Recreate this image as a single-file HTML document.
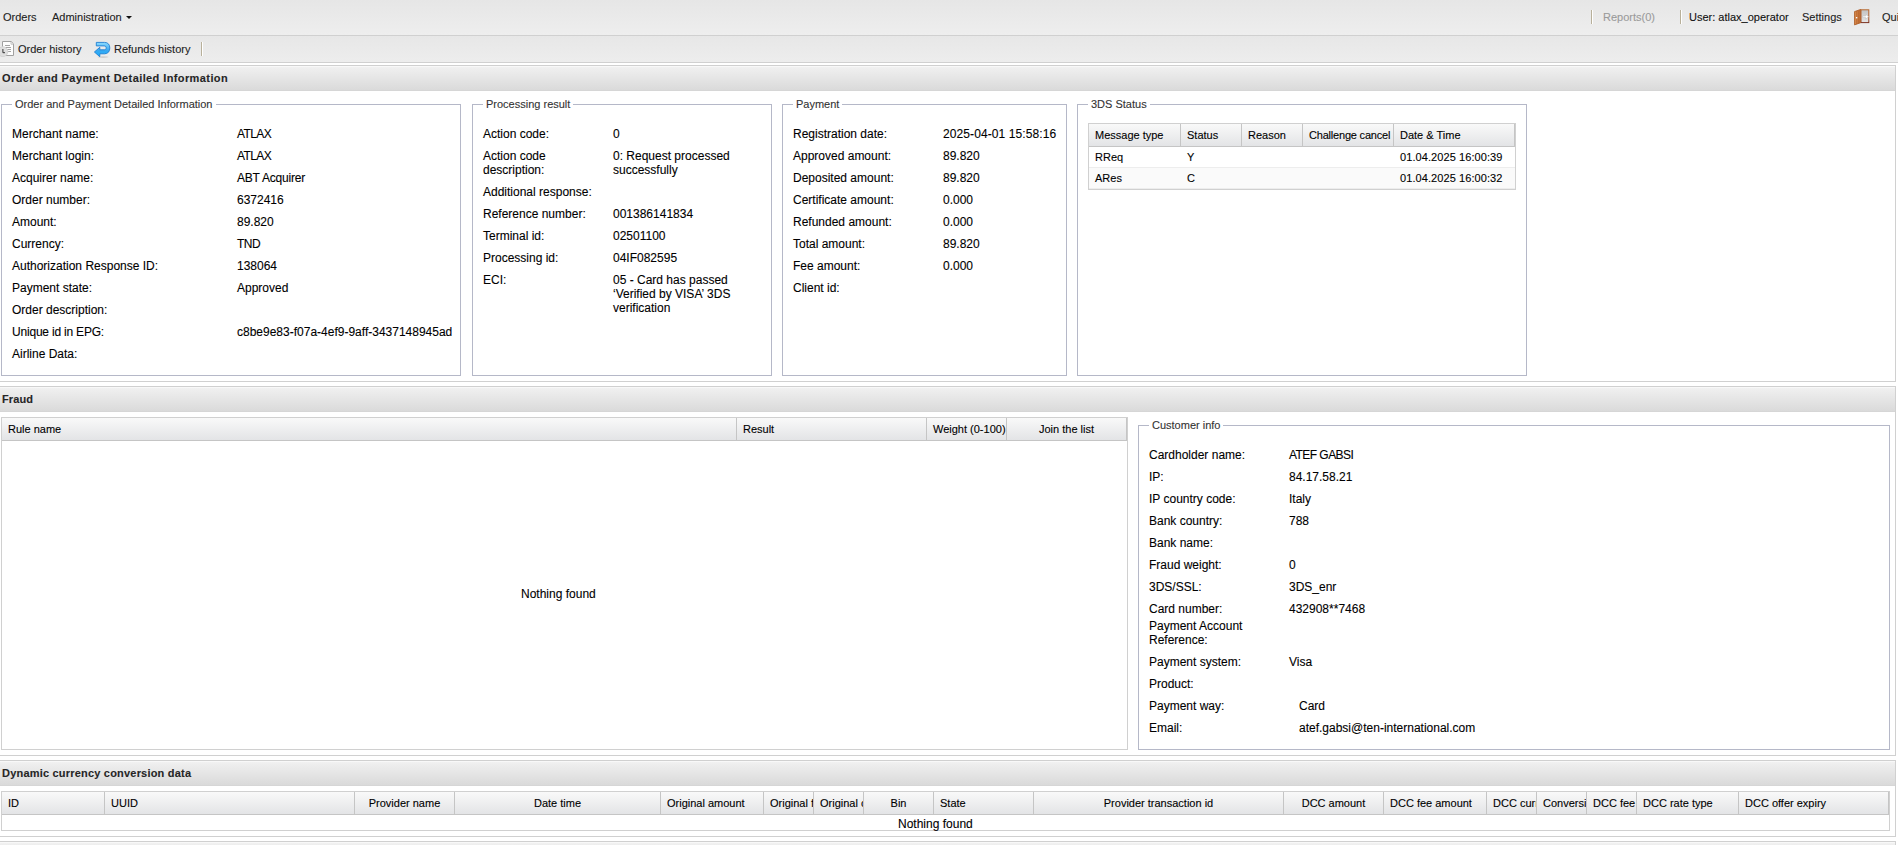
<!DOCTYPE html>
<html lang="en">
<head>
<meta charset="utf-8">
<title>Order and Payment Detailed Information</title>
<style>
*{box-sizing:border-box;}
html,body{margin:0;padding:0;}
body{width:1898px;height:845px;overflow:hidden;background:#fff;position:relative;
  font-family:"Liberation Sans",Tahoma,Arial,sans-serif;font-size:12px;color:#000;-webkit-text-stroke:0.1px;}
.abs{position:absolute;}
/* toolbars */
#tb1{left:0;top:0;width:1898px;height:36px;border-bottom:1px solid #d0d0d0;
  background:linear-gradient(#e6e6e6,#eeeeee);}
#tb2{left:0;top:36px;width:1898px;height:27px;border-bottom:1px solid #d0d0d0;
  background:linear-gradient(#e7e7e7,#ededed);}
.tbtn{position:absolute;font-size:11px;line-height:14px;color:#222;white-space:nowrap;}
.tsep{position:absolute;width:2px;height:14px;border-left:1px solid #b8b09a;border-right:1px solid #fff;}
/* panels */
.panel{position:absolute;left:-5px;width:1901px;border:1px solid #d0d0d0;background:#fff;}
.phead{position:absolute;left:0;top:0;right:0;height:25px;
  background:linear-gradient(#f3f3f3,#eeeeee 12%,#dadada 96%,#d2d2d2);box-shadow:inset 0 1px 0 #f8f8f8;}
.ptitle{position:absolute;left:6px;top:5px;font-size:11px;line-height:14px;font-weight:bold;color:#262626;white-space:nowrap;}
/* fieldsets */
.fs{position:absolute;border:1px solid #b5b8c8;}
.fs .lg{position:absolute;left:10px;top:-8px;background:#fff;padding:0 3px;font-size:11px;line-height:14px;color:#333;white-space:nowrap;}
.rows{position:absolute;left:10px;top:18px;right:10px;}
.row{display:flex;min-height:22px;}
.row .l{flex:none;padding:4px 0;line-height:14px;}
.row .v{flex:1;padding:4px 0;line-height:14px;}
/* grids */
.grid{position:absolute;border:1px solid #d0d0d0;background:#fff;}
.ghead{position:absolute;left:0;top:0;right:0;height:23px;border-bottom:1px solid #c5c5c5;
  background:linear-gradient(#f9f9f9,#e3e4e6);}
.gc{position:absolute;top:0;height:22px;border-right:1px solid #c5c5c5;font-size:11px;line-height:14px;
  padding:4px 0 0 6px;white-space:nowrap;overflow:hidden;color:#000;}
.gc.c{text-align:center;padding-left:0;}
.empty{position:absolute;font-size:12px;line-height:14px;white-space:nowrap;}
.grow{position:absolute;left:0;right:0;height:21px;border-bottom:1px solid #ededed;font-size:11px;line-height:14px;background:#fff;}
.grow.alt{background:#fafafa;}
.grow span{position:absolute;top:3px;white-space:nowrap;}
</style>
</head>
<body>

<!-- ===== top menu toolbar ===== -->
<div id="tb1" class="abs">
  <span class="tbtn" style="left:3px;top:10px;">Orders</span>
  <span class="tbtn" style="left:52px;top:10px;">Administration</span>
  <span class="abs" style="left:126px;top:16px;width:0;height:0;border-left:3px solid transparent;border-right:3px solid transparent;border-top:3px solid #111;"></span>
  <span class="tsep" style="left:1591px;top:10px;"></span>
  <span class="tbtn" style="left:1603px;top:10px;color:#9a9a9a;">Reports(0)</span>
  <span class="tsep" style="left:1680px;top:10px;"></span>
  <span class="tbtn" style="left:1689px;top:10px;color:#111;">User: atlax_operator</span>
  <span class="tbtn" style="left:1802px;top:10px;">Settings</span>
  <svg class="abs" style="left:1854px;top:9px;" width="16" height="17" viewBox="0 0 16 17">
    <defs>
      <linearGradient id="dg" x1="0" y1="0" x2="0" y2="1"><stop offset="0" stop-color="#c2c2c2"/><stop offset="1" stop-color="#e6e6e6"/></linearGradient>
      <linearGradient id="df" x1="0" y1="0" x2="0" y2="1"><stop offset="0" stop-color="#b8682c"/><stop offset="0.7" stop-color="#a9562a"/><stop offset="1" stop-color="#7a3020"/></linearGradient>
      <linearGradient id="dw" x1="0" y1="0" x2="1" y2="0"><stop offset="0" stop-color="#d88b4c"/><stop offset="1" stop-color="#bd6a30"/></linearGradient>
    </defs>
    <rect x="6.9" y="0.8" width="7.9" height="12.8" fill="url(#dg)" stroke="url(#df)" stroke-width="1"/>
    <path d="M0.5 2.6 L6.7 0.4 L6.7 13.7 L0.5 15.9 Z" fill="url(#dw)" stroke="#ab5a26" stroke-width="0.8" stroke-linejoin="round"/>
    <path d="M2.6 2.2 V14.9 M4.6 1.5 V14.2" stroke="#a8592a" stroke-width="0.5" opacity="0.75"/>
    <rect x="1.9" y="8" width="1.4" height="1.4" fill="#fff"/>
    <path d="M8.6 7 H11.6 V5.3 L14.7 7.7 L11.6 10.1 V8.4 H8.6 Z" fill="#fff" stroke="#b9b9b9" stroke-width="0.5"/>
  </svg>
  <span class="tbtn" style="left:1882px;top:10px;">Quit</span>
</div>

<!-- ===== second toolbar ===== -->
<div id="tb2" class="abs">
  <svg class="abs" style="left:-2px;top:5px;" width="16" height="16" viewBox="0 0 16 16">
    <path d="M4.5 0.5 H13.2 L15.5 2.8 V14.5 H4.5 Z" fill="#fdfdfd" stroke="#a0a0a0"/>
    <path d="M13 0.8 V3.2 H15.3" fill="none" stroke="#bdbdbd" stroke-width="0.9"/>
    <path d="M7 4.5 H12 M7 6.5 H13 M8.5 8.5 H13 M9.5 10.5 H13" stroke="#a4a4a4" stroke-width="1"/>
    <circle cx="4.9" cy="10.7" r="4.9" fill="#dfdfdf" stroke="#d2d2d2" stroke-width="0.9"/>
    <path d="M4.9 8 V11.7 H7" fill="none" stroke="#2e2e2e" stroke-width="0.95"/>
  </svg>
  <span class="tbtn" style="left:18px;top:6px;">Order history</span>
  <svg class="abs" style="left:94px;top:5px;" width="17" height="17" viewBox="0 0 17 17">
    <defs>
      <linearGradient id="rg" x1="0" y1="0" x2="0" y2="1"><stop offset="0" stop-color="#8fdcff"/><stop offset="0.55" stop-color="#3aa8f0"/><stop offset="1" stop-color="#15b0ff"/></linearGradient>
    </defs>
    <ellipse cx="9" cy="16.1" rx="5.5" ry="0.8" fill="#000" opacity="0.13"/>
    <path d="M2.3 1.4 H10.5 C14.2 1.4 15.8 3.8 15.8 7 C15.8 10.4 14 12.8 10.5 12.8 H5.8 V15.7 L0.4 11 L5.8 6.3 V8.8 H10.2 C11.6 8.8 12.2 8 12.2 6.9 C12.2 5.7 11.5 4.9 10.2 4.9 H2.3 Z" fill="url(#rg)" stroke="#1f7fd2" stroke-width="0.9" stroke-linejoin="round"/>
  </svg>
  <span class="tbtn" style="left:114px;top:6px;">Refunds history</span>
  <span class="tsep" style="left:201px;top:6px;"></span>
</div>

<!-- ===== Panel 1: Order and Payment Detailed Information ===== -->
<div class="panel" style="top:65px;height:317px;">
  <div class="phead"><span class="ptitle" style="letter-spacing:0.4px;">Order and Payment Detailed Information</span></div>

  <div class="fs" style="left:5px;top:38px;width:460px;height:272px;">
    <span class="lg">Order and Payment Detailed Information</span>
    <div class="rows">
      <div class="row"><span class="l" style="width:225px">Merchant name:</span><span class="v" style="letter-spacing:-0.6px">ATLAX</span></div>
      <div class="row"><span class="l" style="width:225px">Merchant login:</span><span class="v" style="letter-spacing:-0.6px">ATLAX</span></div>
      <div class="row"><span class="l" style="width:225px">Acquirer name:</span><span class="v" style="letter-spacing:-0.2px">ABT Acquirer</span></div>
      <div class="row"><span class="l" style="width:225px">Order number:</span><span class="v">6372416</span></div>
      <div class="row"><span class="l" style="width:225px">Amount:</span><span class="v">89.820</span></div>
      <div class="row"><span class="l" style="width:225px">Currency:</span><span class="v" style="letter-spacing:-0.5px">TND</span></div>
      <div class="row"><span class="l" style="width:225px">Authorization Response ID:</span><span class="v">138064</span></div>
      <div class="row"><span class="l" style="width:225px">Payment state:</span><span class="v">Approved</span></div>
      <div class="row"><span class="l" style="width:225px">Order description:</span><span class="v"></span></div>
      <div class="row"><span class="l" style="width:225px;letter-spacing:-0.2px">Unique id in EPG:</span><span class="v" style="white-space:nowrap">c8be9e83-f07a-4ef9-9aff-3437148945ad</span></div>
      <div class="row"><span class="l" style="width:225px">Airline Data:</span><span class="v"></span></div>
    </div>
  </div>

  <div class="fs" style="left:476px;top:38px;width:300px;height:272px;">
    <span class="lg">Processing result</span>
    <div class="rows">
      <div class="row"><span class="l" style="width:130px">Action code:</span><span class="v">0</span></div>
      <div class="row"><span class="l" style="width:130px">Action code<br>description:</span><span class="v">0: Request processed<br>successfully</span></div>
      <div class="row"><span class="l" style="width:130px">Additional response:</span><span class="v"></span></div>
      <div class="row"><span class="l" style="width:130px">Reference number:</span><span class="v">001386141834</span></div>
      <div class="row"><span class="l" style="width:130px">Terminal id:</span><span class="v">02501100</span></div>
      <div class="row"><span class="l" style="width:130px">Processing id:</span><span class="v">04IF082595</span></div>
      <div class="row"><span class="l" style="width:130px">ECI:</span><span class="v">05 - Card has passed<br>&lsquo;Verified by VISA&rsquo; 3DS<br>verification</span></div>
    </div>
  </div>

  <div class="fs" style="left:786px;top:38px;width:285px;height:272px;">
    <span class="lg">Payment</span>
    <div class="rows">
      <div class="row"><span class="l" style="width:150px">Registration date:</span><span class="v" style="white-space:nowrap;letter-spacing:0.1px">2025-04-01 15:58:16</span></div>
      <div class="row"><span class="l" style="width:150px">Approved amount:</span><span class="v">89.820</span></div>
      <div class="row"><span class="l" style="width:150px">Deposited amount:</span><span class="v">89.820</span></div>
      <div class="row"><span class="l" style="width:150px">Certificate amount:</span><span class="v">0.000</span></div>
      <div class="row"><span class="l" style="width:150px">Refunded amount:</span><span class="v">0.000</span></div>
      <div class="row"><span class="l" style="width:150px">Total amount:</span><span class="v">89.820</span></div>
      <div class="row"><span class="l" style="width:150px">Fee amount:</span><span class="v">0.000</span></div>
      <div class="row"><span class="l" style="width:150px">Client id:</span><span class="v"></span></div>
    </div>
  </div>

  <div class="fs" style="left:1081px;top:38px;width:450px;height:272px;">
    <span class="lg">3DS Status</span>
    <div class="grid" style="left:10px;top:18px;width:428px;height:67px;">
      <div class="ghead">
        <span class="gc" style="left:0;width:92px;">Message type</span>
        <span class="gc" style="left:92px;width:61px;">Status</span>
        <span class="gc" style="left:153px;width:61px;">Reason</span>
        <span class="gc" style="left:214px;width:91px;letter-spacing:-0.2px;">Challenge cancel</span>
        <span class="gc" style="left:305px;width:121px;">Date &amp; Time</span>
      </div>
      <div class="grow" style="top:23px;"><span style="left:6px;">RReq</span><span style="left:98px;">Y</span><span style="left:311px;letter-spacing:0.08px;">01.04.2025 16:00:39</span></div>
      <div class="grow alt" style="top:44px;"><span style="left:6px;">ARes</span><span style="left:98px;">C</span><span style="left:311px;letter-spacing:0.08px;">01.04.2025 16:00:32</span></div>
    </div>
  </div>
</div>

<!-- ===== Panel 2: Fraud ===== -->
<div class="panel" style="top:386px;height:370px;">
  <div class="phead"><span class="ptitle" style="letter-spacing:0.1px;">Fraud</span></div>
  <div class="grid" style="left:5px;top:30px;width:1127px;height:333px;">
    <div class="ghead">
      <span class="gc" style="left:0;width:735px;">Rule name</span>
      <span class="gc" style="left:735px;width:190px;">Result</span>
      <span class="gc" style="left:925px;width:80px;">Weight (0-100)</span>
      <span class="gc c" style="left:1005px;width:120px;">Join the list</span>
    </div>
    <div class="empty" style="left:519px;top:169px;">Nothing found</div>
  </div>
  <div class="fs" style="left:1142px;top:38px;width:752px;height:325px;">
    <span class="lg">Customer info</span>
    <div class="rows">
      <div class="row"><span class="l" style="width:140px">Cardholder name:</span><span class="v" style="letter-spacing:-0.55px">ATEF GABSI</span></div>
      <div class="row"><span class="l" style="width:140px">IP:</span><span class="v">84.17.58.21</span></div>
      <div class="row"><span class="l" style="width:140px">IP country code:</span><span class="v">Italy</span></div>
      <div class="row"><span class="l" style="width:140px">Bank country:</span><span class="v">788</span></div>
      <div class="row"><span class="l" style="width:140px">Bank name:</span><span class="v"></span></div>
      <div class="row"><span class="l" style="width:140px">Fraud weight:</span><span class="v">0</span></div>
      <div class="row"><span class="l" style="width:140px">3DS/SSL:</span><span class="v">3DS_enr</span></div>
      <div class="row"><span class="l" style="width:140px">Card number:</span><span class="v">432908**7468</span></div>
      <div class="row" style="min-height:31px;height:31px;"><span class="l" style="width:140px;padding:0;margin-top:-1px;">Payment Account<br>Reference:</span><span class="v"></span></div>
      <div class="row"><span class="l" style="width:140px">Payment system:</span><span class="v">Visa</span></div>
      <div class="row"><span class="l" style="width:140px">Product:</span><span class="v"></span></div>
      <div class="row"><span class="l" style="width:150px">Payment way:</span><span class="v">Card</span></div>
      <div class="row"><span class="l" style="width:150px">Email:</span><span class="v">atef.gabsi@ten-international.com</span></div>
    </div>
  </div>
</div>

<!-- ===== Panel 3: Dynamic currency conversion data ===== -->
<div class="panel" style="top:760px;height:77px;">
  <div class="phead"><span class="ptitle" style="letter-spacing:0.2px;">Dynamic currency conversion data</span></div>
  <div class="grid" style="left:5px;top:30px;width:1889px;height:40px;">
    <div class="ghead">
      <span class="gc" style="left:0px;width:103px;">ID</span>
      <span class="gc" style="left:103px;width:250px;">UUID</span>
      <span class="gc c" style="left:353px;width:100px;">Provider name</span>
      <span class="gc c" style="left:453px;width:206px;">Date time</span>
      <span class="gc" style="left:659px;width:103px;">Original amount</span>
      <span class="gc" style="left:762px;width:50px;">Original fee</span>
      <span class="gc" style="left:812px;width:50px;">Original currency</span>
      <span class="gc c" style="left:862px;width:70px;">Bin</span>
      <span class="gc" style="left:932px;width:100px;">State</span>
      <span class="gc c" style="left:1032px;width:250px;">Provider transaction id</span>
      <span class="gc c" style="left:1282px;width:100px;">DCC amount</span>
      <span class="gc" style="left:1382px;width:103px;">DCC fee amount</span>
      <span class="gc" style="left:1485px;width:50px;">DCC currency</span>
      <span class="gc" style="left:1535px;width:50px;">Conversion rate</span>
      <span class="gc" style="left:1585px;width:50px;">DCC fee</span>
      <span class="gc" style="left:1635px;width:102px;">DCC rate type</span>
      <span class="gc" style="left:1737px;width:150px;">DCC offer expiry</span>
    </div>
    <div class="empty" style="left:896px;top:25px;">Nothing found</div>
  </div>
</div>

<!-- ===== Panel 4 (cut off at the bottom edge) ===== -->
<div class="panel" style="top:841px;height:40px;">
  <div class="phead"></div>
</div>


</body>
</html>
